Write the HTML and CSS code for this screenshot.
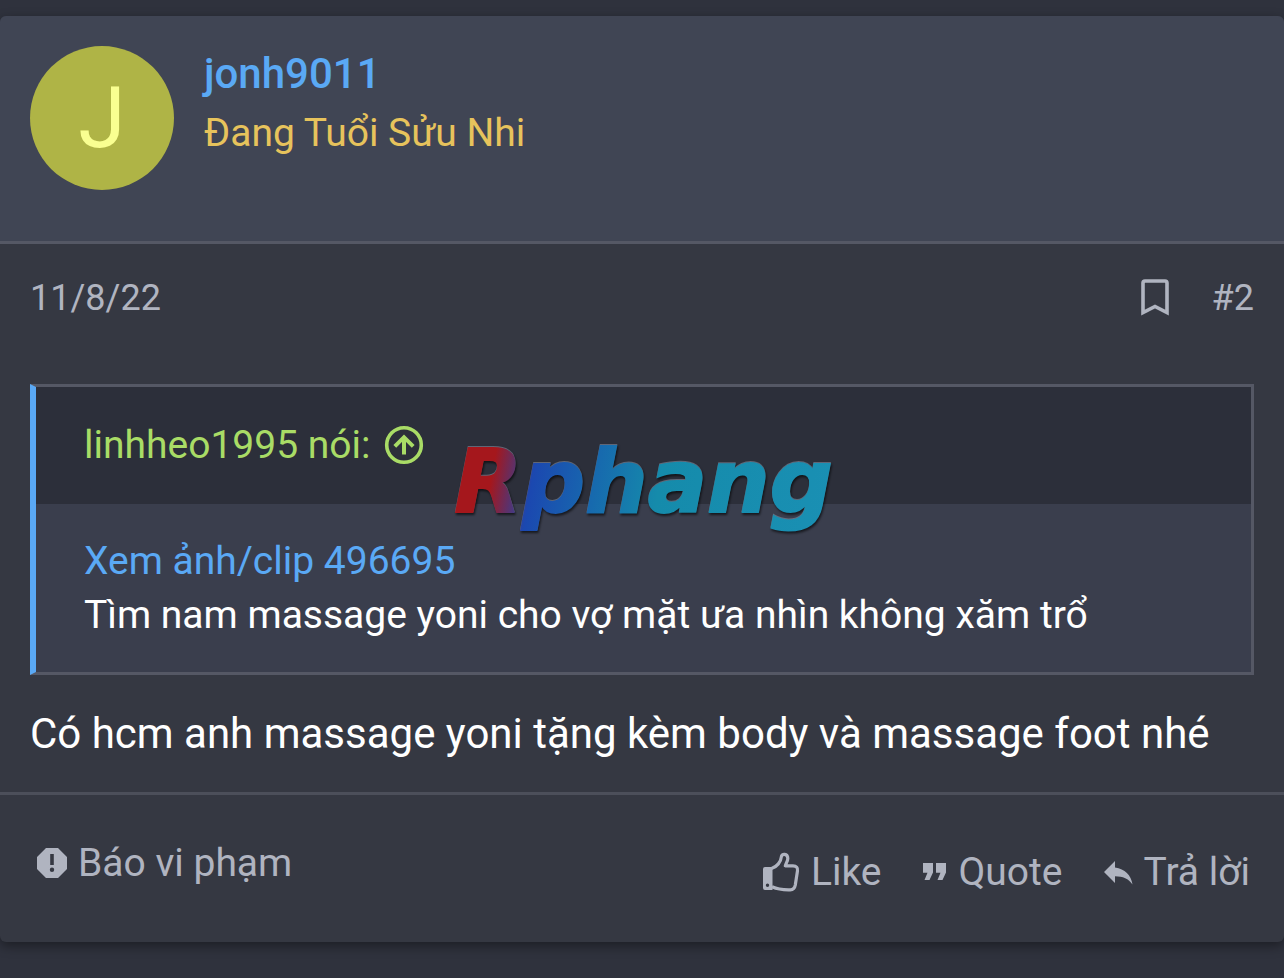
FILE: index.html
```html
<!DOCTYPE html>
<html lang="vi">
<head>
    <meta charset="UTF-8">
    <meta name="viewport" content="width=device-width, initial-scale=1.0">
    <title>Bài viết #2</title>
    <link rel="stylesheet" href="styles.css">
</head>
<body>
    <article class="message">
        <header class="message-user">
            <a href="#" class="avatar">J</a>
            <div class="user-details">
                <h4 class="user-name"><a href="#">jonh9011</a></h4>
                <h5 class="user-title">Đang Tuổi Sửu Nhi</h5>
            </div>
        </header>

        <div class="message-meta">
            <a href="#" class="meta-date"><time datetime="2022-08-11">11/8/22</time></a>
            <div class="meta-right">
                <a href="#" class="bookmark" aria-label="Bookmark">
                    <svg width="28" height="38" viewBox="0 0 28 38">
                        <path d="M2 33.5V4a2 2 0 0 1 2-2h20a2 2 0 0 1 2 2v29.500L14 27.500z" fill="none" stroke="currentColor" stroke-width="3.600"/>
                    </svg>
                </a>
                <a href="#">#2</a>
            </div>
        </div>

        <div class="message-body">
            <blockquote class="quote">
                <div class="quote-title">
                    <a href="#">linhheo1995 nói:
                        <svg width="40" height="40" viewBox="0 0 40 40">
                            <circle cx="20" cy="20" r="17.300" fill="none" stroke="currentColor" stroke-width="3.600"/>
                            <path d="M20 29.500V12M10.800 21.300L20 12.200l9.200 9.100" fill="none" stroke="currentColor" stroke-width="4"/>
                        </svg>
                    </a>
                </div>
                <div class="quote-content">
                    <a href="#">Xem ảnh/clip 496695</a>
                    <p>Tìm nam massage yoni cho vợ mặt ưa nhìn không xăm trổ</p>
                </div>
                <div class="watermark">Rphang</div>
            </blockquote>
            <p class="message-text">Có hcm anh massage yoni tặng kèm body và massage foot nhé</p>
        </div>

        <footer class="action-bar">
            <a href="#" class="action">
                <svg width="30" height="30" viewBox="0 0 30 30">
                    <path fill="currentColor" fill-rule="evenodd" d="M9 0h12l9 9v12l-9 9H9l-9-9V9zM13.200 6v11h3.600V6zM15 19.500a2.200 2.200 0 1 0 0 4.400a2.200 2.200 0 0 0 0-4.400z"/>
                </svg>
                Báo vi phạm
            </a>
            <div class="action-group">
                <a href="#" class="action">
                    <svg width="38" height="40" viewBox="0 0 38 40">
                        <path fill="currentColor" fill-rule="evenodd" d="M3 15h7.500v23H3a2 2 0 0 1-2-2V17a2 2 0 0 1 2-2zM5.500 31.500a1.700 1.700 0 1 0 0 3.400a1.700 1.700 0 0 0 0-3.400z"/>
                        <path d="M9.500 16.500C15 15 19 9.500 19.300 5C19.500 1 25.800 1.500 25.800 6.500C25.800 9 24 11 23.300 13.800H31c3.500 0 5 2 4.500 5L33.300 33c-.6 3.300-2 4.800-5 4.800C21 38 16 37.500 10 34.800" fill="none" stroke="currentColor" stroke-width="3.200" stroke-linejoin="round"/>
                    </svg>
                    Like
                </a>
                <a href="#" class="action">
                    <svg width="26" height="20" viewBox="0 0 26 20">
                        <path fill="currentColor" d="M1 1h10v9.500L7.500 18h-5L5.500 10.700H1zM14 1h10v9.500L20.500 18h-5l3-7.300H14z"/>
                    </svg>
                    Quote
                </a>
                <a href="#" class="action">
                    <svg width="30" height="26" viewBox="0 0 30 26">
                        <path fill="currentColor" d="M1 13L12 2v6.500C22 10 28 16 29.500 25.500C25.500 19.500 20 17.500 12 17.300V24z"/>
                    </svg>
                    Trả lời
                </a>
            </div>
        </footer>
    </article>
</body>
</html>
```
FILE: styles.css
```css
* {
    box-sizing: border-box;
}
body {
    margin: 0;
    padding: 16px 0 36px;
    background-color: #2f323d;
    color: #fff;
    font-family: Roboto, sans-serif;
    font-size: 39px;
    line-height: 54px;
}
h4, h5, p, blockquote {
    margin: 0;
    font-weight: 400;
}
a {
    color: inherit;
    text-decoration: none;
}
svg {
    display: block;
    flex: none;
}
.message {
    background-color: #353842;
    border-radius: 6px;
    box-shadow: 0 4px 12px rgba(0,0,0,0.4);
}
.message-user {
    display: flex;
    gap: 30px;
    padding: 30px 30px 51px;
    background-color: #404554;
    border-bottom: 3px solid #555865;
    border-radius: 6px 6px 0 0;
}
.avatar {
    width: 144px;
    height: 144px;
    border-radius: 50%;
    background-color: #afb446;
    color: #f9ff91;
    font-size: 86px;
    line-height: 144px;
    text-align: center;
}
.user-name {
    font-size: 42px;
    line-height: 56px;
}
.user-name a {
    color: #5aa9f5;
    font-weight: 500;
}
.user-title {
    color: #e7c35c;
    font-size: 39px;
    line-height: 62px;
}
.message-meta {
    display: flex;
    justify-content: space-between;
    padding: 27px 30px 0;
    color: #b0b4c0;
    font-size: 36px;
}
.meta-right {
    display: flex;
    align-items: center;
    gap: 43px;
}
.message-body {
    padding: 59px 30px 30px;
}
.quote {
    position: relative;
    border: 3px solid #555865;
    border-left: 6px solid #5aa9f5;
    background-color: #3a3e4d;
}
.quote-title {
    padding: 31px 48px 32px;
    background-color: #2c2f3a;
    color: #a9dc66;
}
.quote-title a {
    display: flex;
    align-items: center;
    gap: 14px;
}
.quote-content {
    padding: 30px 48px 30px;
}
.quote-content a {
    color: #5aa9f5;
}
/* site logo stamped over the quote */
.watermark {
    position: absolute;
    top: 43px;
    left: 0;
    right: 0;
    width: max-content;
    margin: 0 auto;
    padding: 0 8px;
    font-family: "DejaVu Sans", sans-serif;
    font-size: 88px;
    font-style: italic;
    font-weight: 700;
    line-height: 104px;
    color: transparent;
    background: linear-gradient(100deg, #a5171c 13%, #1b48b0 23%, #1769ae 38%, #158bab 54%, #1a90b4);
    background-clip: text;
    -webkit-background-clip: text;
    -webkit-text-stroke: 2px transparent;
    filter: drop-shadow(0 -1px 0 rgba(150,160,180,0.5)) drop-shadow(1px 2px 1px rgba(0,0,0,0.6));
    pointer-events: none;
}
.message-text {
    padding-top: 31px;
    font-size: 42px;
    line-height: 56px;
}
.action-bar {
    display: flex;
    justify-content: space-between;
    align-items: flex-start;
    padding: 41px 34px 43px 37px;
    border-top: 3px solid #4c4f5a;
    color: #b0b4c0;
}
.action-group {
    display: flex;
    gap: 40px;
    padding-top: 9px;
}
.action {
    display: flex;
    align-items: center;
    gap: 11px;
}
```
